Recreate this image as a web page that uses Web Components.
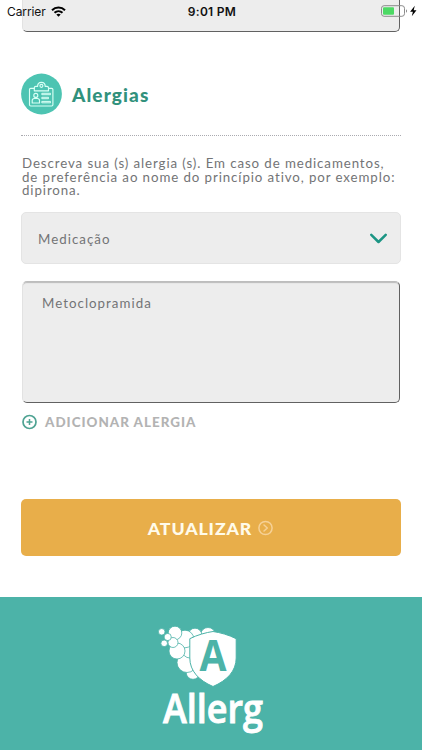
<!DOCTYPE html>
<html lang="pt-BR">
<head>
<meta charset="utf-8">
<meta name="viewport" content="width=device-width, initial-scale=1">
<title>Alergias</title>
<style>
  html, body {
    margin: 0;
    height: 100%;
    background: #fff;
  }

  body {
    overflow: hidden;
    font-family: Lato, "Open Sans", sans-serif;
    color: #737476;
  }
</style>
</head>
<body>
<allerg-app></allerg-app>

<script>
class StatusBar extends HTMLElement {
  constructor() {
    super();
    this.attachShadow({mode: "open"});
    this.shadowRoot.innerHTML = `
<style>
    :host {
        /* floats over the scrolled form */
        position: absolute;
        top: 0;
        left: 0;
        right: 0;
        z-index: 1;
        box-sizing: border-box;
        height: 22px;
        padding: 0 5px 0 7px;
        display: grid;
        grid-template-columns: 1fr auto 1fr;
        align-items: center;
        font-family: Inter, Roboto, sans-serif;
        font-size: 12px;
        color: #111;
    }

    .left, .right {
        display: flex;
        align-items: center;
    }

    .left {
        gap: 5px;
        letter-spacing: -0.1px;
    }

    .right {
        justify-content: flex-end;
    }

    .time {
        font-weight: 600;
        letter-spacing: 0.3px;
    }

    svg {
        display: block;
    }
</style>
<div class="left">
    <span>${this.getAttribute("carrier")}</span>
    <svg width="15" height="11" viewBox="0 0 15 11" fill="none" stroke="#000" stroke-width="2">
        <path d="M1 4.3C4.6 .7 10.4 .7 14 4.3"/>
        <path d="M3.5 6.8C5.8 4.6 9.2 4.6 11.5 6.8"/>
        <path d="M5.3 8.6C6.6 7.5 8.4 7.5 9.7 8.6L7.5 10.8Z" fill="#000" stroke="none"/>
    </svg>
</div>
<span class="time">${this.getAttribute("time")}</span>
<div class="right">
    <svg width="36" height="12" viewBox="0 0 36 12">
        <rect x=".5" y=".7" width="23" height="10.6" rx="2.6" fill="none" stroke="#8b8b8b"/>
        <rect x="2" y="2.2" width="11" height="7.6" rx="1" fill="#4cd964"/>
        <path d="M25 4.3C26.4 4.8 26.4 7.2 25 7.7Z" fill="#8b8b8b"/>
        <path d="M33.8 .8L29.1 6.8H31.9L30.8 11.2L35.5 5.2H32.7Z" fill="#000"/>
    </svg>
</div>
`;
  }
}

class SectionTitle extends HTMLElement {
  constructor() {
    super();
    this.attachShadow({mode: "open"});
    this.shadowRoot.innerHTML = `
<style>
    :host {
        display: flex;
        align-items: center;
        gap: 10px;
        height: 42px;
        padding-bottom: 20px;
        border-bottom: 1px dotted #aaaab0;
    }

    h2 {
        margin: 0;
        font-size: 19px;
        font-weight: 900;
        letter-spacing: 1.1px;
        color: #31917c;
    }

    svg {
        display: block;
    }
</style>
<svg width="41" height="42" viewBox="0 0 41 42" fill="none" stroke="#d9fff5" stroke-width="1.15" stroke-linejoin="round">
    <circle cx="20.5" cy="21" r="20.4" fill="#4dc4b2" stroke="none"/>
    <path d="M14 15.3H9.7Q8.5 15.3 8.5 16.5V31.8Q8.5 33 9.7 33H30.7Q31.9 33 31.9 31.8V16.5Q31.9 15.3 30.7 15.3H27"/>
    <path d="M13.3 17.8V14.8Q13.3 13.4 14.8 13.4H16.6C16.6 8 24.2 8 24.2 13.4H26Q27.5 13.4 27.5 14.8V17.8Z"/>
    <circle cx="20.4" cy="12.8" r="1.5"/>
    <circle cx="14.8" cy="22.4" r="2"/>
    <path d="M11.2 30V27.6Q11.2 25.5 13.2 25.5H16.5Q18.5 25.5 18.5 27.6V30Z"/>
    <path d="M20.8 20.3H29.5V21.7H20.8ZM20.8 24.3H27.5V25.7H20.8ZM20.8 28.4H29.5V29.8H20.8Z" stroke-width="1"/>
</svg>
<h2><slot></slot></h2>
`;
  }
}

class SelectField extends HTMLElement {
  constructor() {
    super();
    this.attachShadow({mode: "open"});
    this.shadowRoot.innerHTML = `
<style>
    :host {
        display: flex;
        align-items: center;
        justify-content: space-between;
        box-sizing: border-box;
        height: 52px;
        padding: 2px 13px 0 16px;
        border: 1px solid #e4e4e4;
        border-radius: 5px;
        background: #ededed;
        font-size: 13.3px;
        letter-spacing: 1.03px;
        cursor: pointer;
    }

    svg {
        display: block;
    }
</style>
<slot></slot>
<svg width="17" height="11" viewBox="0 0 17 11" fill="none" stroke="#1c9584" stroke-width="2.5" stroke-linecap="round" stroke-linejoin="round">
    <path d="M1.3 1.8L8.5 9L15.7 1.8"/>
</svg>
`;
  }
}

class TextBox extends HTMLElement {
  constructor() {
    super();
    this.attachShadow({mode: "open"});
    this.shadowRoot.innerHTML = `
<style>
    :host {
        display: block;
        box-sizing: border-box;
        height: 122px;
        margin: 0 1px;
        padding: 13px 19px;
        border: 1px solid;
        border-color: #bdbdbd #616161 #616161 #e2e2e2;
        border-radius: 5px;
        background: #ededed;
        box-shadow: inset 0 2px 1px -1px #bbb;
        font-size: 13.3px;
        line-height: 17px;
        letter-spacing: 1.03px;
    }
</style>
<slot></slot>
`;
  }
}

class AddLink extends HTMLElement {
  constructor() {
    super();
    this.attachShadow({mode: "open"});
    this.shadowRoot.innerHTML = `
<style>
    :host {
        display: flex;
        align-items: center;
        gap: 8px;
        height: 16px;
        padding-left: 1px;
        font-size: 13.4px;
        font-weight: 900;
        letter-spacing: 1px;
        color: #b3b3b3;
        cursor: pointer;
    }

    svg {
        display: block;
    }
</style>
<svg width="15" height="16" viewBox="0 0 15 16" fill="none" stroke="#4fa393">
    <circle cx="7.5" cy="8" r="6.5" stroke-width="1.7"/>
    <path d="M4.5 8H10.5M7.5 5V11" stroke-width="1.5"/>
</svg>
<slot></slot>
`;
  }
}

class SubmitButton extends HTMLElement {
  constructor() {
    super();
    this.attachShadow({mode: "open"});
    this.shadowRoot.innerHTML = `
<style>
    :host {
        display: block;
    }

    button {
        display: flex;
        align-items: center;
        justify-content: center;
        gap: 6px;
        width: 100%;
        height: 57px;
        padding: 2px 1px 0 0;
        border: 0;
        border-radius: 5px;
        background: #e8ae4a;
        font: 900 17.7px Lato, "Open Sans", sans-serif;
        letter-spacing: 0.9px;
        color: #fffbea;
        cursor: pointer;
    }
</style>
<button type="button">
    <slot></slot>
    <svg width="15" height="16" viewBox="0 0 15 16" fill="none" stroke="#f6d196" stroke-width="1.5">
        <circle cx="7.5" cy="8" r="6.6"/>
        <path d="M6 5L9.3 8L6 11" stroke-linecap="round" stroke-linejoin="round"/>
    </svg>
</button>
`;
  }
}

class BrandFooter extends HTMLElement {
  constructor() {
    super();
    this.attachShadow({mode: "open"});
    this.shadowRoot.innerHTML = `
<style>
    :host {
        display: flex;
        justify-content: center;
        box-sizing: border-box;
        height: 153px;
        padding-top: 18px;
        background: #4cb3a8;
    }

    svg {
        display: block;
        overflow: visible;
    }

    text {
        font-family: "Open Sans", "Noto Sans", sans-serif;
    }
</style>
<svg width="122" height="135" viewBox="150 615 122 135">
    <!-- bubbles -->
    <g fill="#fff" stroke="#4cb3a8" stroke-width=".8">
        <circle cx="208" cy="635" r="7.5"/>
        <circle cx="195" cy="635" r="6.8"/>
        <circle cx="193" cy="672.5" r="6.8"/>
        <circle cx="187" cy="662.5" r="10"/>
        <circle cx="190" cy="650" r="8"/>
        <circle cx="185" cy="639" r="8.8"/>
        <circle cx="177" cy="651" r="8"/>
        <circle cx="175" cy="633" r="6.8"/>
        <circle cx="173" cy="642.5" r="5"/>
        <circle cx="167.7" cy="637" r="3.6"/>
        <circle cx="161.7" cy="631.8" r="3.3"/>
        <circle cx="164.2" cy="643.3" r="3.3"/>
    </g>
    <path d="M213 631.5C206 632.5 197 635 189.8 638.7V658C189.8 671 199 680.5 213 686.5C227 680.5 236.2 671 236.2 658V638.7C229 635 220 632.5 213 631.5Z" fill="#fff" stroke="#4cb3a8" stroke-width="1"/>
    <text x="199.5" y="670.5" font-size="43" font-weight="700" textLength="27" lengthAdjust="spacingAndGlyphs" fill="#4cb3a8">A</text>
    <text x="163" y="723" font-size="39.5" font-weight="600" textLength="100" lengthAdjust="spacingAndGlyphs" fill="#fff" stroke="#fff" stroke-width=".9">Allerg</text>
</svg>
`;
  }
}

class AllergApp extends HTMLElement {
  constructor() {
    super();
    this.attachShadow({mode: "open"});
    this.shadowRoot.innerHTML = `
<style>
    :host {
        display: flex;
        flex-direction: column;
        height: 750px;
        overflow: hidden;
    }

    main {
        flex: 1;
        display: flex;
        flex-direction: column;
        padding: 0 21px;
    }

    /* only the bottom of the previous field is still on screen */
    .previous {
        flex: none;
        margin-top: -90px;
        margin-bottom: 41px;
    }

    p {
        margin: 21px -10px 14px 1px;
        font-size: 13.3px;
        line-height: 13.5px;
        letter-spacing: 0.9px;
    }

    .allergy {
        margin-top: 17px;
        margin-bottom: 11px;
    }

    submit-button {
        margin-top: 69px;
    }
</style>
<status-bar carrier="Carrier" time="9:01 PM"></status-bar>
<main>
    <text-box class="previous"></text-box>
    <section-title>Alergias</section-title>
    <p>Descreva sua (s) alergia (s). Em caso de medicamentos,<br>de preferência ao nome do princípio ativo, por exemplo:<br>dipirona.</p>
    <select-field>Medicação</select-field>
    <text-box class="allergy">Metoclopramida</text-box>
    <add-link>ADICIONAR ALERGIA</add-link>
    <submit-button>ATUALIZAR</submit-button>
</main>
<brand-footer></brand-footer>
`;
  }
}

customElements.define("status-bar", StatusBar);
customElements.define("section-title", SectionTitle);
customElements.define("select-field", SelectField);
customElements.define("text-box", TextBox);
customElements.define("add-link", AddLink);
customElements.define("submit-button", SubmitButton);
customElements.define("brand-footer", BrandFooter);
customElements.define("allerg-app", AllergApp);
</script>
</body>
</html>
